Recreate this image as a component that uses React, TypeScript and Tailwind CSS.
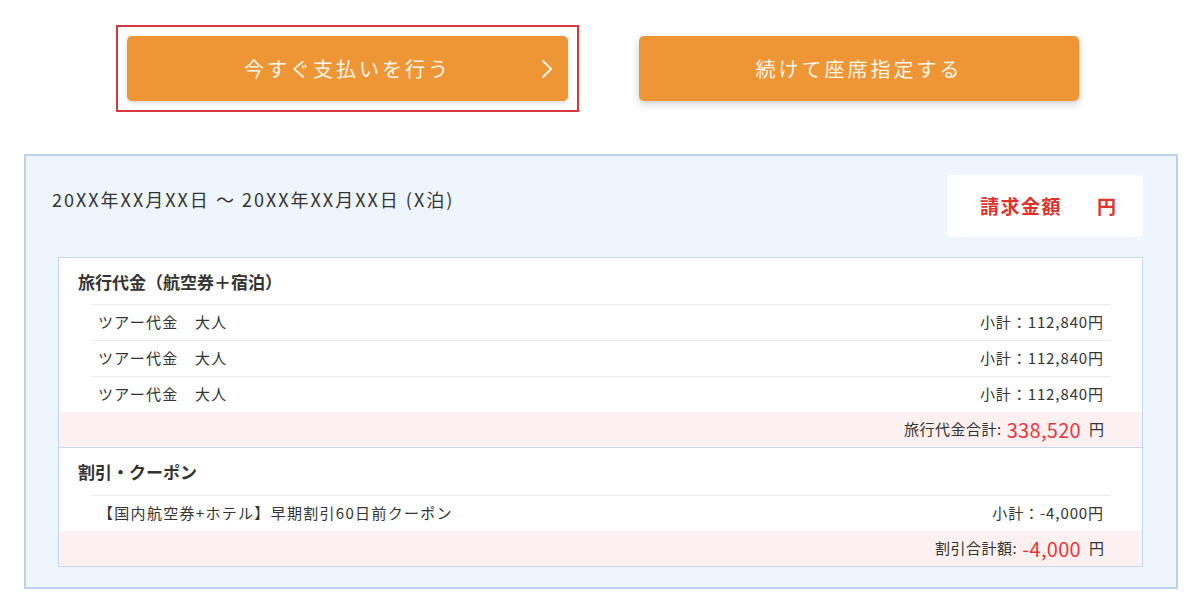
import React from "react";

const font = { fontFamily: '"Noto Sans CJK JP", "Noto Sans", sans-serif' };

function Chevron() {
  return (
    <svg width="12" height="20" viewBox="0 0 12 20" fill="none" className="absolute right-[15px] top-1/2 -translate-y-1/2">
      <path d="M2 2 L10 10 L2 18" stroke="#fff6ea" strokeWidth="2" strokeLinecap="round" strokeLinejoin="round" />
    </svg>
  );
}

function ItemRow({ label, amount }: { label: string; amount: string }) {
  return (
    <div className="ml-[32px] mr-[31px] h-[36px] border-t border-[#ececec] flex items-center justify-between pl-[7px] pr-[7px] text-[15px] text-[#333] tracking-[1.3px]">
      <span>{label}</span>
      <span className="tracking-[0.9px]">{amount}</span>
    </div>
  );
}

function TotalRow({ label, amount }: { label: string; amount: string }) {
  return (
    <div className="h-[36px] bg-[#fcf1f0] border-b border-[#c6d6f0] flex items-center justify-end pr-[38px] text-[15px] text-[#333]">
      <span className="tracking-[0.5px]">{label}</span>
      <span className="text-[20px] text-[#e8383d] ml-[5px] mr-[8px] leading-none tracking-[0.3px]">{amount}</span>
      <span>円</span>
    </div>
  );
}

export default function App() {
  return (
    <div className="w-[1200px] h-[611px] bg-white overflow-hidden" style={font}>
      <div className="flex items-center pl-[116px] pt-[25px]">
        <div className="border-2 border-[#d9363e] px-[9px] py-[9px]">
          <button className="relative w-[441px] h-[65px] rounded-[5px] bg-[#ee9535] text-[#fff6ea] text-[20px] tracking-[3px] shadow-[0_2px_4px_rgba(0,0,0,0.15)]">
            今すぐ支払いを行う
            <Chevron />
          </button>
        </div>
        <button className="ml-[60px] w-[440px] h-[65px] rounded-[5px] bg-[#ee9535] text-[#fff6ea] text-[20px] tracking-[3px] shadow-[0_3px_8px_rgba(0,0,0,0.2)]">
          続けて座席指定する
        </button>
      </div>

      <div className="ml-[24px] mt-[42px] w-[1154px] border-2 border-[#bcd0f0] bg-[#eff5fd] pt-[19px] pb-[20px] pl-[32px] pr-[33px]">
        <div className="flex items-start justify-between">
          <div className="-ml-[6px] mt-[11px] text-[18px] text-[#333] tracking-[2px]">
            20XX年XX月XX日 ～ 20XX年XX月XX日 (X泊)
          </div>
          <div className="w-[196px] h-[62px] bg-white rounded-[4px] flex items-center pl-[33px] font-bold text-[#e0322c]">
            <span className="text-[19px] tracking-[1.5px]">請求金額</span>
            <span className="ml-[35px] text-[19px]">円</span>
          </div>
        </div>

        <div className="mt-[20px] bg-white border border-[#c6d6f0] border-b-0">
          <div className="h-[46px] pt-[11px] pl-[19px] text-[17px] font-bold text-[#333]">
            旅行代金（航空券＋宿泊）
          </div>
          <ItemRow label="ツアー代金　大人" amount="小計：112,840円" />
          <ItemRow label="ツアー代金　大人" amount="小計：112,840円" />
          <ItemRow label="ツアー代金　大人" amount="小計：112,840円" />
          <TotalRow label="旅行代金合計:" amount="338,520" />

          <div className="h-[47px] pt-[11px] pl-[19px] text-[17px] font-bold text-[#333]">
            割引・クーポン
          </div>
          <ItemRow label="【国内航空券+ホテル】早期割引60日前クーポン" amount="小計：-4,000円" />
          <TotalRow label="割引合計額:" amount="-4,000" />
        </div>
      </div>
    </div>
  );
}
